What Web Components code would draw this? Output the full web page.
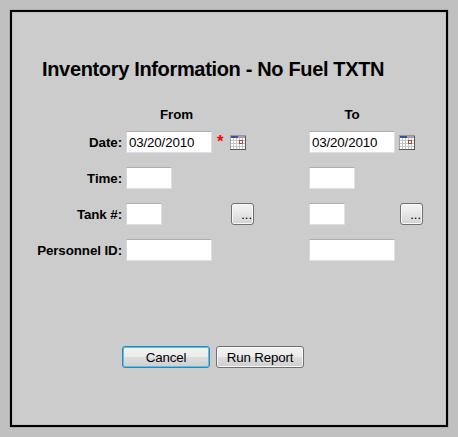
<!DOCTYPE html>
<html lang="en">
<head>
<meta charset="utf-8">
<title>Inventory Information</title>
<style>
html, body { margin: 0; height: 100%; background: #c0c0c0; }
body { font: 13.33px "Liberation Sans", Arial, sans-serif; color: #000; }
</style>
</head>
<body>
<report-panel>
  <panel-title slot="title">Inventory Information - No Fuel TXTN</panel-title>
  <form-grid>
    <column-head></column-head><column-head style="padding-right:4px">From</column-head><column-head></column-head><column-head style="padding-right:5px">To</column-head><column-head></column-head>
    <field-label>Date:</field-label><text-field value="03/20/2010" size="86" required></text-field><calendar-icon style="margin-left:-1px"></calendar-icon><text-field value="03/20/2010" size="86"></text-field><calendar-icon style="margin-left:-1px"></calendar-icon>
    <field-label>Time:</field-label><text-field size="46"></text-field><span></span><text-field size="46"></text-field><span></span>
    <field-label>Tank #:</field-label><text-field size="36"></text-field><push-button kind="more">...</push-button><text-field size="36"></text-field><push-button kind="more">...</push-button>
    <field-label>Personnel ID:</field-label><text-field size="86"></text-field><span></span><text-field size="86"></text-field><span></span>
  </form-grid>
  <push-button slot="actions" kind="default">Cancel</push-button>
  <push-button slot="actions">Run Report</push-button>
</report-panel>
<script>
const define = (name, html, setup) => customElements.define(name, class extends HTMLElement {
  constructor() {
    super();
    this.attachShadow({ mode: "open" }).innerHTML = html;
  }
  connectedCallback() { if (setup) setup(this, this.shadowRoot); }
});

define("report-panel", `<style>
:host { display: flex; box-sizing: border-box; height: 437px; width: 458px; padding: 10px; }
section { box-sizing: border-box; display: flex; flex-direction: column; width: 438px; height: 417px; border: 2px solid #000; background: #ccc; box-shadow: 0 0 1px #555, inset 0 0 1px #555; }
header { height: 93px; padding: 45px 0 0 30px; box-sizing: border-box; }
footer { display: flex; gap: 6px; padding: 78px 0 0 110px; }
</style><section><header><slot name="title"></slot></header><slot></slot><footer><slot name="actions"></slot></footer></section>`);

define("panel-title", `<style>
:host { display: block; font-weight: bold; font-size: 20px; line-height: 24px; white-space: nowrap; letter-spacing: -0.34px; }
</style><slot></slot>`);

define("form-grid", `<style>
:host { display: grid; grid-template-columns: 114px 105px 78px 91px 1fr; grid-template-rows: 19px repeat(4, 36px); align-items: center; }
</style><slot></slot>`);

define("column-head", `<style>
:host { display: block; text-align: center; font-weight: bold; font-size: 13.33px; letter-spacing: -0.05px; line-height: 18px; padding-top: 1px; }
</style><slot></slot>`);

define("field-label", `<style>
:host { display: block; text-align: right; font-weight: bold; font-size: 13.33px; letter-spacing: -0.08px; line-height: 18px; padding: 2px 4px 0 0; white-space: nowrap; }
</style><slot></slot>`);

define("text-field", `<style>
:host { display: flex; align-items: center; }
.box { box-sizing: border-box; height: 22px; background: #fff; border: 1px solid #dbe1e8; border-top-color: #abadb3; border-left-color: #d3d7dd; border-radius: 1px; padding-left: 2px; font-size: 13.33px; letter-spacing: -0.15px; line-height: 21px; }
.mark { color: #f00; font-weight: bold; font-size: 17px; line-height: 18px; margin-left: 5px; height: 18px; }
</style><div class="box"></div>`, (host, root) => {
  const box = root.querySelector(".box");
  box.style.width = host.getAttribute("size") + "px";
  box.textContent = host.getAttribute("value") || "";
  if (host.hasAttribute("required")) {
    const mark = document.createElement("span");
    mark.className = "mark";
    mark.textContent = "*";
    root.append(mark);
  }
});

define("calendar-icon", `<style>
:host { display: block; width: 16px; height: 15px; padding-top: 1px; } svg { display: block; }
</style><svg width="16" height="15" viewBox="0 0 16 15" shape-rendering="crispEdges">
<rect width="16" height="15" fill="#c8c4c4"/>
<rect width="16" height="1" fill="#98989c"/>
<rect x="1" y="1" width="14" height="2" fill="#a2a2a8"/>
<rect x="1" y="1" width="7" height="2" fill="#3f4da8"/>
<path fill="#fff" d="M1 3h2v2H1zM4 3h2v2H4zM7 3h2v2H7zM10 3h2v2h-2zM13 3h2v2h-2zM1 6h2v2H1zM4 6h2v2H4zM7 6h2v2H7zM13 6h2v2h-2zM1 9h2v2H1zM4 9h2v2H4zM7 9h2v2H7zM10 9h2v2h-2zM13 9h2v2h-2zM1 12h2v2H1zM4 12h2v2H4zM7 12h2v2H7zM10 12h2v2h-2zM13 12h2v2h-2z"/>
<rect x="9.5" y="5.5" width="3" height="3" fill="#fff" stroke="#a34a4a"/>
<path d="M.5 1v13" stroke="#a0a0a4" fill="none"/>
<path d="M15.5 1v14M0 14.5h16" stroke="#555" fill="none"/>
</svg>`);

define("push-button", `<style>
:host { display: block; }
button { display: block; box-sizing: border-box; width: 88px; height: 22px; margin: 0; padding: 0; border: 1px solid #707070; border-radius: 3px; font: 13.33px/21px "Liberation Sans", Arial, sans-serif; letter-spacing: -0.15px; color: #000; white-space: nowrap; background: linear-gradient(#f2f2f2 0, #ebebeb 50%, #dddddd 50%, #cfcfcf 100%); box-shadow: inset 0 0 0 1px #f8f8f8; }
:host([kind=default]) button { border-color: #3c7fb1; box-shadow: inset 0 0 0 1px #48c8f0; }
:host([kind=more]) button { width: 23px; text-align: right; padding-right: 1px; font-size: 13px; letter-spacing: 0; overflow: hidden; background: linear-gradient(#f4f4f4, #e8e8e8 45%, #d2d2d2); }
</style><button type="button"><slot></slot></button>`);
</script>
</body>
</html>
